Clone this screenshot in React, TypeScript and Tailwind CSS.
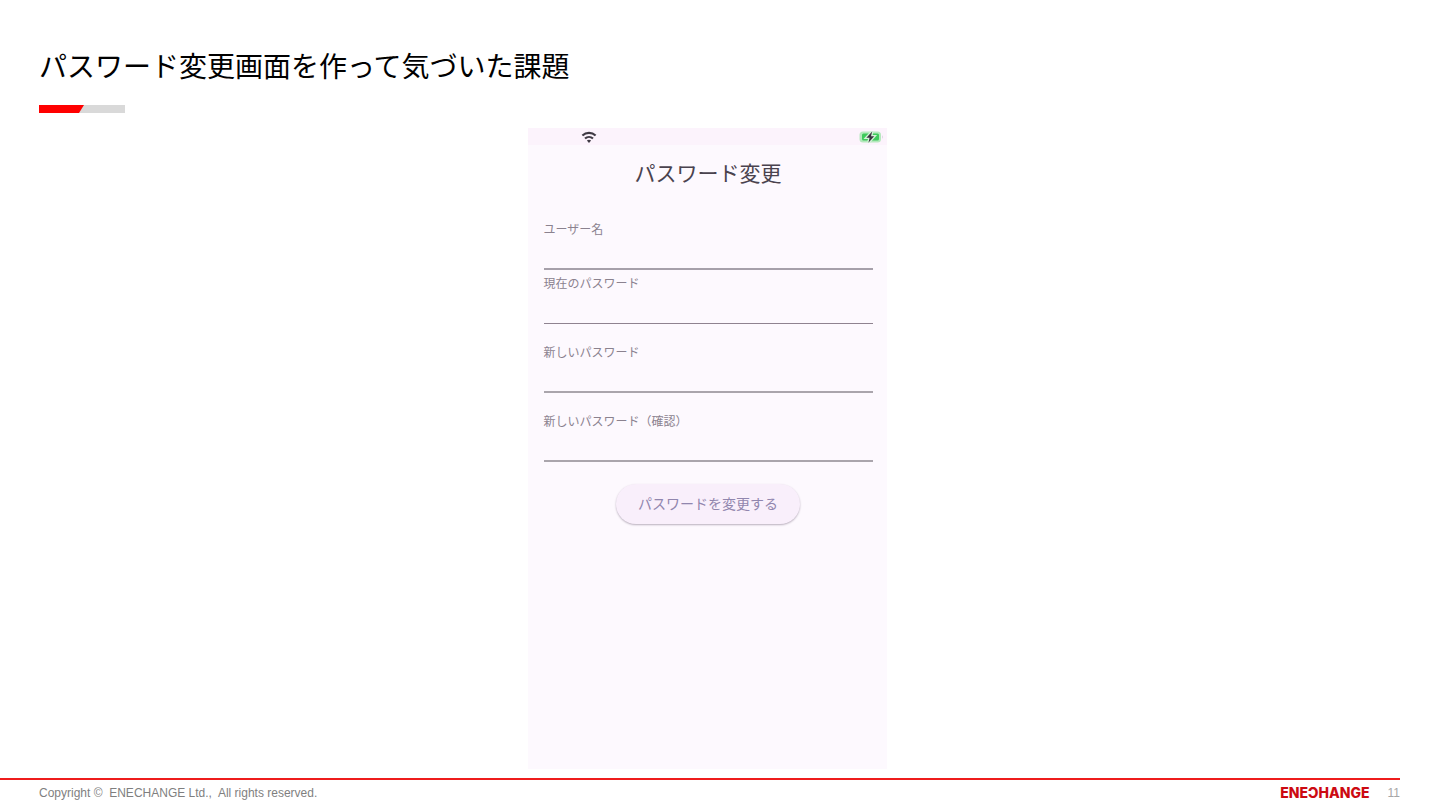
import React from 'react';

type Field = {
  id: string;
  label: string;
  type: 'text' | 'password';
  className: string;
  line: string;
};

const fields: Field[] = [
  { id: 'username', label: 'ユーザー名', type: 'text', className: '', line: 'border-b-2 border-[#a6a0aa]' },
  { id: 'current', label: '現在のパスワード', type: 'password', className: 'mt-[6px]', line: 'border-b border-[#8f8390]' },
  { id: 'new', label: '新しいパスワード', type: 'password', className: 'mt-[21px]', line: 'border-b-2 border-[#aaa5ac]' },
  { id: 'confirm', label: '新しいパスワード（確認）', type: 'password', className: 'mt-[21px]', line: 'border-b-2 border-[#aaa5ac]' },
];

const WifiIcon: React.FC = () => (
  <svg className="w-4 h-3" viewBox="0 0 16 12" fill="none" stroke="#3f3a44" strokeWidth="2.1" aria-hidden="true">
    <path d="M1.4 4.6C5.2 0.9 10.8 0.9 14.6 4.6" />
    <path d="M4 7.6C6.3 5.4 9.7 5.4 12 7.6" />
    <path d="M5.9 9.6C7.1 8.5 8.9 8.5 10.1 9.6L8 11.9Z" fill="#3f3a44" stroke="none" />
  </svg>
);

const BatteryIcon: React.FC = () => (
  <svg className="w-[25px] h-3" viewBox="0 0 25 12" aria-hidden="true">
    <rect x="0.5" y="0.5" width="21.5" height="11" rx="3.5" fill="#b5e8bd" />
    <rect x="3" y="2.5" width="17" height="7" rx="1.5" fill="#3fca5c" />
    <path d="M23.2 4.2C24.4 4.8 24.4 7.2 23.2 7.8Z" fill="#d9d3de" />
    <path d="M13.2 0.4L7.4 6.8H10.6L9.4 11.8L15.2 5.2H12Z" fill="#3a3540" stroke="#d3f2d8" strokeWidth="2.6" paintOrder="stroke" />
  </svg>
);

const PasswordScreen: React.FC = () => {
  return (
    <section className="w-[359px] bg-[#fdf9fe]">
      <div className="h-[17px] flex items-center justify-between pl-[53px] pr-[3px] bg-[#fcf3fc]">
        <WifiIcon />
        <BatteryIcon />
      </div>

      <div className="pl-4 pr-[14px]">
        <h2 className="pt-[15px] text-center text-[21px] leading-7 text-[#4a434e]">パスワード変更</h2>

        <form className="mt-[34px]" onSubmit={(e) => e.preventDefault()}>
          {fields.map((field) => (
            <div key={field.id} className={field.className}>
              <label htmlFor={field.id} className="block text-xs leading-4 text-[#8b828f]">
                {field.label}
              </label>
              <input
                id={field.id}
                type={field.type}
                className={`block w-full h-8 bg-transparent text-sm outline-none ${field.line}`}
              />
            </div>
          ))}

          <div className="mt-[22px] flex justify-center">
            <button
              type="submit"
              className="h-10 px-[22px] rounded-full bg-[#f9effb] text-sm text-[#9186ae] shadow-[0_1px_2px_#b9afbd]"
            >
              パスワードを変更する
            </button>
          </div>
        </form>
      </div>
    </section>
  );
};

const App: React.FC = () => {
  return (
    <div className="min-h-screen flex flex-col bg-white font-['Liberation_Sans','Noto_Sans_CJK_JP',sans-serif]">
      <header className="pt-[50px] px-[39px]">
        <h1 className="text-[28px] leading-9 text-black">パスワード変更画面を作って気づいた課題</h1>
        <svg className="mt-[19px] w-[86px] h-2" viewBox="0 0 86 8" aria-hidden="true">
          <path d="M0 0H86V8H0Z" fill="#d9d9d9" />
          <path d="M0 0H45L40 8H0Z" fill="#ff0000" />
        </svg>
      </header>

      <main className="flex-1 flex justify-center pt-[15px] pb-[9px] pr-[26px]">
        <PasswordScreen />
      </main>

      <footer className="mr-10 h-8 pb-1 border-t-2 border-[#ee1c1c] flex items-center justify-between pl-[39px]">
        <small className="text-xs text-[#7f7f7f] whitespace-pre">Copyright ©  ENECHANGE Ltd.,  All rights reserved.</small>
        <div className="flex items-center gap-[18px]">
          <span className="font-['Inter',sans-serif] text-sm font-extrabold text-[#cc0a12]">ENEƆHANGE</span>
          <span className="text-xs text-[#a6a6a6]">11</span>
        </div>
      </footer>
    </div>
  );
};

export default App;
